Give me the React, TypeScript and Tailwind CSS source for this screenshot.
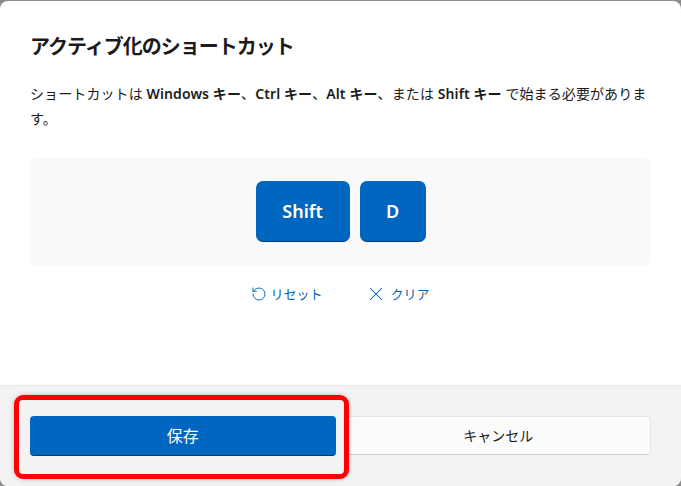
import React from "react";
import { RotateCcw, X } from "lucide-react";

const FONT = "font-['Noto_Sans','Noto_Sans_CJK_JP',sans-serif]";

function KeyCap({ label, width }: { label: string; width: string }) {
  return (
    <div
      className={`${width} h-[61px] rounded-[7px] bg-[#0067c0] border-b border-[#003d73] flex items-center justify-center text-white text-[18px] font-semibold`}
    >
      {label}
    </div>
  );
}

export default function App() {
  return (
    <div className={`w-[681px] h-[486px] bg-[#8c8c8c] pt-px ${FONT}`}>
      <div className="relative h-[485px] rounded-[8px] bg-white overflow-hidden flex flex-col">
        <div className="flex-1 px-[30px] pt-[32px]">
          <h1 className="text-[20px] leading-[28px] font-semibold text-[#1b1b1b] tracking-[-1px]">
            アクティブ化のショートカット
          </h1>
          <p className="mt-[20px] text-[14px] leading-[25px] text-[#1b1b1b] tracking-[0.1px]">
            <span className="block whitespace-nowrap">
              ショートカットは <b className="font-semibold">Windows キー</b>、
              <b className="font-semibold">Ctrl キー</b>、
              <b className="font-semibold">Alt キー</b>、または{" "}
              <b className="font-semibold">Shift キー</b> で始まる必要がありま
            </span>
            <span className="block">す。</span>
          </p>
          <div className="mt-[26px] h-[109px] rounded-[8px] bg-[#f9f9f9] flex items-center justify-center gap-[10px]">
            <KeyCap label="Shift" width="w-[94px]" />
            <KeyCap label="D" width="w-[66px]" />
          </div>
          <div className="mt-[17px] flex justify-center gap-[44px] text-[13px] leading-[20px] text-[#005fb8]">
            <div className="flex items-center gap-[3px]">
              <RotateCcw size={16} strokeWidth={1.4} />
              <span>リセット</span>
            </div>
            <div className="flex items-center gap-[2px]">
              <X size={22} strokeWidth={1.1} className="-mx-[2px]" />
              <span className="ml-[4px]">クリア</span>
            </div>
          </div>
        </div>
        <div className="h-[101px] border-t border-[#e5e5e5] bg-[#f3f3f3] px-[30px] pt-[30px]">
          <div className="grid grid-cols-2 gap-[10px]">
            <button className="h-[40px] rounded-[4px] bg-[#0067c0] border-b border-[#003d73] text-white text-[16px]">
              保存
            </button>
            <button className="h-[39px] rounded-[4px] bg-[#fbfbfb] border border-[#e5e5e5] border-b-[#d0d0d0] text-[#1b1b1b] text-[14px]">
              キャンセル
            </button>
          </div>
        </div>
        <div className="absolute left-[14px] top-[394px] w-[335px] h-[84px] rounded-[9px] border-[5px] border-[#ff0000] shadow-[0_0_4px_rgba(0,0,0,0.25)]" />
      </div>
    </div>
  );
}
